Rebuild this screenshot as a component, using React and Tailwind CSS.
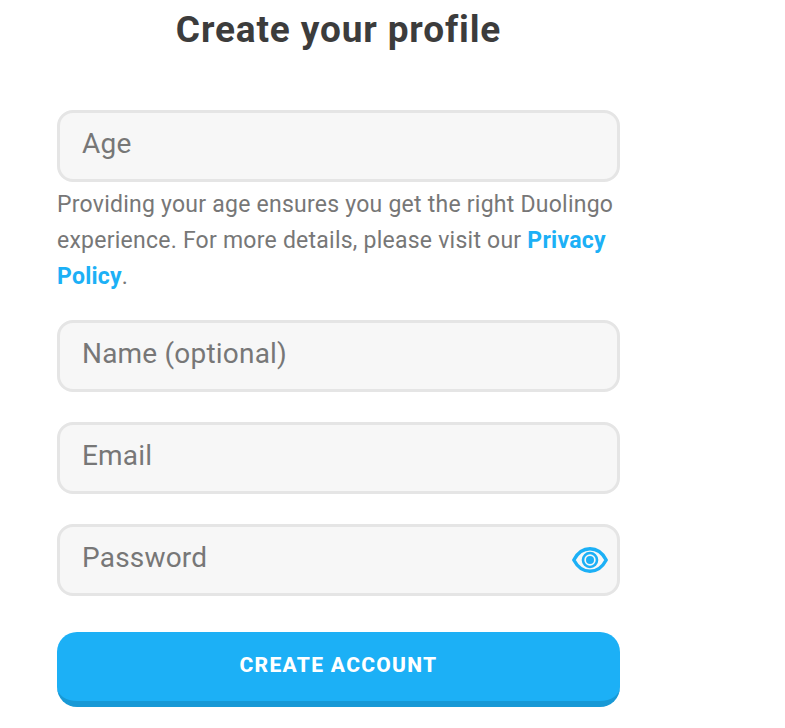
const font = { fontFamily: 'Roboto, "Noto Sans", sans-serif' };
function Field({ label, children }) {
  return (
    <div className="relative h-[72px] rounded-2xl border-[3px] border-[#e5e5e5] bg-[#f7f7f7] pl-[22px] pt-[11px] text-[28px] leading-[40px] tracking-[0.2px] text-[#777777]">
      {label}
      {children}
    </div>
  );
}
function Eye() {
  return (
    <svg className="absolute right-[9px] top-[20px]" width="36" height="26" viewBox="0 0 36 26" fill="none">
      <path d="M1.8 13C5.5 6 11 1.8 18 1.8S30.5 6 34.2 13C30.5 20 25 24.2 18 24.2S5.5 20 1.8 13Z" stroke="#1cb0f6" strokeWidth="3.4" strokeLinejoin="round" />
      <circle cx="18" cy="13" r="7" stroke="#1cb0f6" strokeWidth="2.6" />
      <circle cx="18" cy="13" r="4" fill="#1cb0f6" />
    </svg>
  );
}
export default function App() {
  return (
    <div className="h-[728px] w-[785px] bg-white pl-[57px]" style={font}>
      <div className="w-[563px]">
        <h1 className="h-[110px] pt-[6px] text-center text-[37px] font-bold leading-[48px] tracking-[0.85px] text-[#3c3c3c]">Create your profile</h1>
        <Field label="Age" />
        <p className="mt-[5px] text-[23px] leading-[36px] tracking-[0.24px] text-[#777777]">
          Providing your age ensures you get the right Duolingo experience. For more details, please visit our{" "}
          <a className="font-bold text-[#1cb0f6]">Privacy Policy</a>.
        </p>
        <div className="mt-[25px] flex flex-col gap-[30px]">
          <Field label="Name (optional)" />
          <Field label="Email" />
          <Field label="Password"><Eye /></Field>
        </div>
        <button className="mt-[36px] h-[75px] w-full rounded-[20px] border-b-[6px] border-[#1899d6] bg-[#1cb0f6] pb-[2px] text-[21px] font-extrabold tracking-[1.3px] text-white">CREATE ACCOUNT</button>
      </div>
    </div>
  );
}
